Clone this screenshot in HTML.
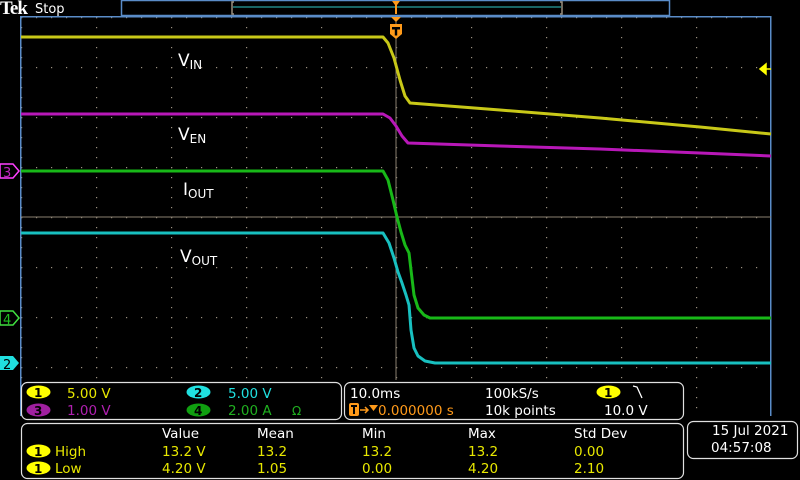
<!DOCTYPE html>
<html><head><style>
body{margin:0;background:#000;width:800px;height:480px;overflow:hidden}
svg{display:block}
text{font-family:"DejaVu Sans","Liberation Sans",sans-serif}
</style></head><body>
<svg width="800" height="480" viewBox="0 0 800 480">
<defs>
<pattern id="ph" x="21" y="17" width="15" height="50" patternUnits="userSpaceOnUse"><rect x="0" y="0" width="1.2" height="1.2" fill="#9a9080"/></pattern>
<pattern id="pv" x="21" y="17" width="75" height="10" patternUnits="userSpaceOnUse"><rect x="0" y="0" width="1.2" height="1.2" fill="#9a9080"/></pattern>
</defs>
<!-- top bar -->
<text x="0" y="14" font-weight="bold" font-size="19" fill="#fff" style="font-family:'Liberation Serif',serif;letter-spacing:-1px">Tek</text>
<text x="35" y="13" font-size="13" fill="#fff">Stop</text>
<rect x="121.5" y="0.5" width="548" height="15" fill="none" stroke="#5a8cc8" stroke-width="1.5"/>
<line x1="233" y1="7" x2="561" y2="7" stroke="#30c8c8"/>
<path d="M234 2h-2v12h2M560 2h2v12h-2" fill="none" stroke="#9a9080" stroke-width="1.5"/>
<path d="M392 1h8l-3 4v9h-2v-9z" fill="#ff9a1a"/>
<!-- graticule -->
<rect x="21" y="16" width="750" height="401" fill="url(#ph)"/>
<rect x="21" y="16" width="750" height="401" fill="url(#pv)"/>
<rect x="21" y="16" width="750" height="1.5" fill="#5a8cc8"/>
<rect x="20" y="16" width="1.5" height="400" fill="#5a8cc8"/>
<rect x="770" y="16" width="1.5" height="400" fill="#5a8cc8"/>
<line x1="21" y1="217" x2="771" y2="217" stroke="#8a8070" stroke-width="1"/>
<line x1="396" y1="17" x2="396" y2="380" stroke="#8a8070" stroke-width="1"/>
<!-- traces -->
<g fill="none" stroke-width="3" stroke-linejoin="round">
<polyline stroke="#c8c818" points="21,37 383,37 388,43 394,58 400,80 405,96 410,103 500,110 600,118 700,127 771,134"/>
<polyline stroke="#b818b8" points="21,114 383,114 390,118 396,126 402,136 408,143 500,146 600,149 700,153 771,156"/>
<polyline stroke="#18b818" points="21,171 383,171 388,180 393,200 397,217 401,232 405,245 409,253 411,270 414,295 418,308 424,315 430,318 771,318"/>
<polyline stroke="#18c0c0" points="21,233 383,233 389,243 394,258 398,272 402,283 406,295 409,305 411,330 414,348 418,356 425,361 435,363 771,363"/>
</g>
<!-- T marker -->
<path d="M391 17h10l-5 5z" fill="#ff9a1a"/>
<path d="M390 24h12v10l-6 5l-6-5z" fill="#ff9a1a"/>
<path d="M392 27h8v2.5h-2.8v6h-2.4v-6h-2.8z" fill="#000"/>
<!-- right level marker -->
<path d="M760 69l6-5v10z M764 69h7" fill="#ffff00" stroke="#ffff00" stroke-width="1.5"/>
<!-- left markers -->
<path d="M0 164h13l6 7l-6 7h-13z" fill="#000" stroke="#ff40ff" stroke-width="1.5"/>
<text x="3" y="177" font-size="13" fill="#c020c0">3</text>
<path d="M0 311h13l6 7l-6 7h-13z" fill="#000" stroke="#40e040" stroke-width="1.5"/>
<text x="3" y="324" font-size="13" fill="#20c020">4</text>
<path d="M0 356h13l6 7l-6 7h-13z" fill="#20e0e0"/>
<text x="3" y="369" font-size="13" fill="#000">2</text>
<!-- labels -->
<g fill="#fff" font-size="17">
<text x="178" y="66">V<tspan font-size="12" dy="3">IN</tspan></text>
<text x="178" y="140">V<tspan font-size="12" dy="3">EN</tspan></text>
<text x="183" y="195">I<tspan font-size="12" dy="3">OUT</tspan></text>
<text x="180" y="262">V<tspan font-size="12" dy="3">OUT</tspan></text>
</g>
<!-- readout boxes -->
<g fill="#000" stroke="#e0e0e0" stroke-width="1.2">
<rect x="21.5" y="382.5" width="320" height="37" rx="6"/>
<rect x="344.5" y="382.5" width="339" height="37" rx="6"/>
<rect x="21.5" y="423.5" width="662" height="55" rx="6"/>
<rect x="687.5" y="421.5" width="110" height="37" rx="6"/>
</g>
<g font-size="13.5">
<ellipse cx="38.5" cy="392" rx="12" ry="6.5" fill="#ffff00"/><text x="34" y="397" fill="#000" font-weight="bold" font-size="12">1</text>
<text x="67" y="398" fill="#e8e800">5.00 V</text>
<ellipse cx="198.5" cy="392" rx="12" ry="6.5" fill="#20e0e0"/><text x="194" y="397" fill="#000" font-weight="bold" font-size="12">2</text>
<text x="228" y="398" fill="#20e0e0">5.00 V</text>
<ellipse cx="38.5" cy="410" rx="12" ry="6.5" fill="#a020a0"/><text x="34" y="415" fill="#000" font-weight="bold" font-size="12">3</text>
<text x="67" y="415" fill="#b020b0">1.00 V</text>
<ellipse cx="198.5" cy="410" rx="12" ry="6.5" fill="#10a010"/><text x="194" y="415" fill="#000" font-weight="bold" font-size="12">4</text>
<text x="228" y="415" fill="#20b020">2.00 A</text>
<text x="292" y="415" fill="#20b020" font-size="12">Ω</text>

<text x="350" y="398" fill="#fff">10.0ms</text>
<text x="485" y="398" fill="#fff">100kS/s</text>
<ellipse cx="608.5" cy="392" rx="12" ry="6.5" fill="#ffff00"/><text x="604" y="397" fill="#000" font-weight="bold" font-size="12">1</text>
<path d="M633 386l4 1v0l5 11" fill="none" stroke="#fff" stroke-width="1.3"/>
<rect x="349" y="403" width="10" height="13" rx="2" fill="#ff9a1a"/><path d="M351 405h6v2h-2v7h-2v-7h-2z" fill="#000"/>
<path d="M360 410h8M365 407l3 3l-3 3" stroke="#ff9a1a" fill="none" stroke-width="1.5"/>
<path d="M369 405h9l-4.5 6z" fill="#ff9a1a"/>
<text x="378" y="415" fill="#ff9a1a">0.000000 s</text>
<text x="485" y="415" fill="#fff">10k points</text>
<text x="604" y="415" fill="#fff">10.0 V</text>

<text x="162" y="438" fill="#fff">Value</text>
<text x="257" y="438" fill="#fff">Mean</text>
<text x="362" y="438" fill="#fff">Min</text>
<text x="468" y="438" fill="#fff">Max</text>
<text x="574" y="438" fill="#fff">Std Dev</text>
<ellipse cx="38.5" cy="451" rx="12" ry="6.5" fill="#ffff00"/><text x="34" y="456" fill="#000" font-weight="bold" font-size="12">1</text>
<text x="55" y="456" fill="#e8e800">High</text>
<text x="162" y="456" fill="#e8e800">13.2 V</text><text x="257" y="456" fill="#e8e800">13.2</text><text x="362" y="456" fill="#e8e800">13.2</text><text x="468" y="456" fill="#e8e800">13.2</text><text x="574" y="456" fill="#e8e800">0.00</text>
<ellipse cx="38.5" cy="468" rx="12" ry="6.5" fill="#ffff00"/><text x="34" y="473" fill="#000" font-weight="bold" font-size="12">1</text>
<text x="55" y="473" fill="#e8e800">Low</text>
<text x="162" y="473" fill="#e8e800">4.20 V</text><text x="257" y="473" fill="#e8e800">1.05</text><text x="362" y="473" fill="#e8e800">0.00</text><text x="468" y="473" fill="#e8e800">4.20</text><text x="574" y="473" fill="#e8e800">2.10</text>

<text x="712" y="435" fill="#fff">15 Jul  2021</text>
<text x="711" y="452" fill="#fff">04:57:08</text>
</g>
</svg>
</body></html>
